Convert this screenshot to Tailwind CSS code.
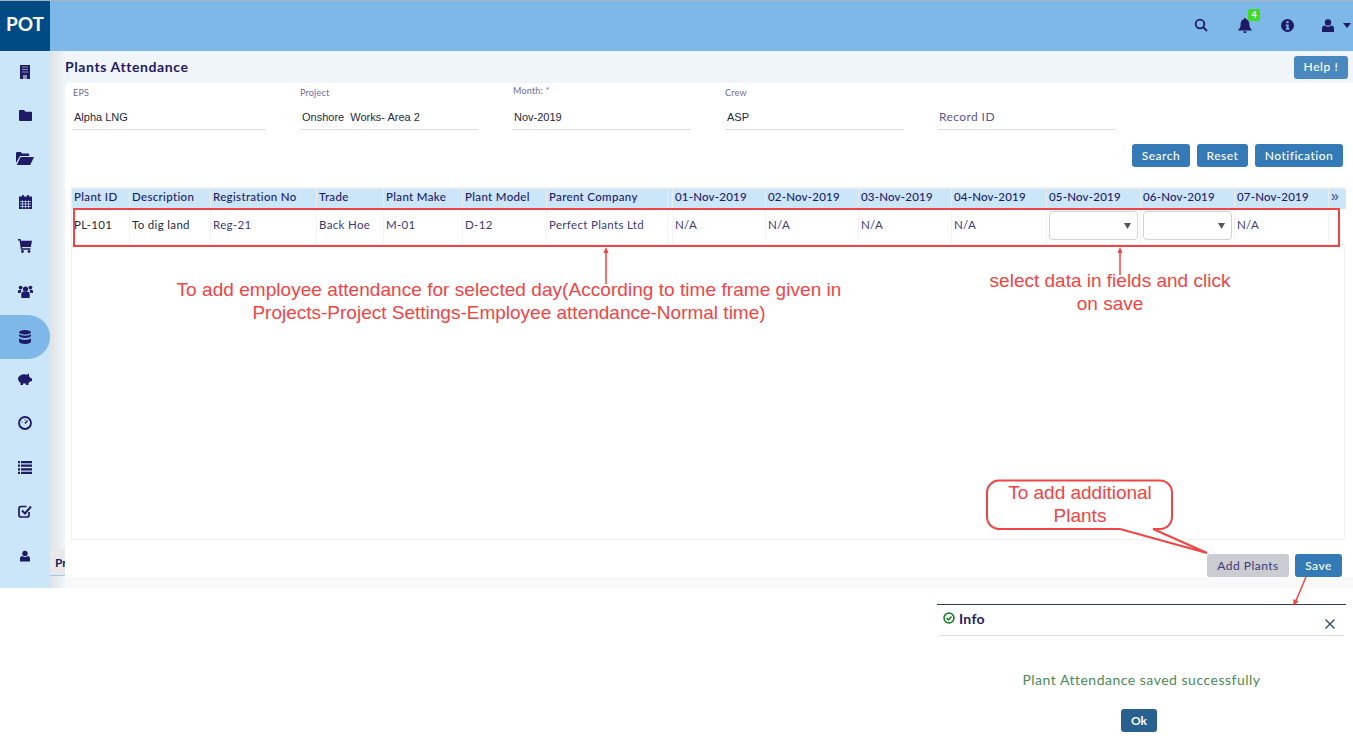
<!DOCTYPE html>
<html>
  <head>
    <title>Plants Attendance</title>
    <script src="https://cdn.jsdelivr.net/npm/@tailwindcss/browser@4"></script>
  </head>
  <body class="bg-white font-['Lato',sans-serif] text-[#1f1a66] overflow-hidden">
    <div class="relative w-[1353px] h-[740px] overflow-hidden">
      <div class="flex flex-col h-[588px]">
        <!-- top bar -->
        <header class="h-[51px] shrink-0 flex items-center bg-[#7db8e8] border-t border-[#a9b4bf]">
          <div class="w-[50px] h-full flex items-center justify-center pb-[3px] bg-[#004b84] text-white text-[19px] font-bold">POT</div>
          <div class="ml-auto flex items-center pr-[2px] pb-[2px] text-[#1f1a66]">
            <svg class="w-[14px] h-[14px] mr-[30px]" viewBox="0 0 14 14" fill="none" stroke="currentColor" stroke-width="1.8"><circle cx="6" cy="6" r="4.3"/><path d="M9.2 9.2L13 13"/></svg>
            <div class="relative mr-[29px]">
              <svg class="w-[14px] h-[15px]" viewBox="0 0 14 15" fill="currentColor"><path d="M7 0a1 1 0 0 1 1 1.2C10.300 1.700 11.300 3.500 11.300 6c0 3 1 4.500 2.400 5.800v.7H.3v-.7C1.700 10.500 2.700 9 2.700 6c0-2.500 1-4.300 3.300-4.800A1 1 0 0 1 7 0zM5.300 13.200h3.400A1.700 1.700 0 0 1 7 15a1.700 1.700 0 0 1-1.700-1.800z"/></svg>
              <span class="absolute left-[10px] top-[-9px] w-[12px] h-[12px] rounded-[2px] bg-[#3fdc24] text-white text-[9px] font-bold leading-[12px] text-center">4</span>
            </div>
            <svg class="w-[13px] h-[13px] mr-[28px]" viewBox="0 0 14 14"><circle cx="7" cy="7" r="7" fill="currentColor"/><rect x="5.800" y="2.300" width="2.400" height="2.200" fill="#7db8e8"/><path d="M5 6h3.200v4.300H9.200v1.300H5v-1.300h1V7.300H5z" fill="#7db8e8"/></svg>
            <svg class="w-[12px] h-[13px] mr-[9px]" viewBox="0 0 12 13" fill="currentColor"><circle cx="6" cy="3.400" r="3.200"/><path d="M0 13V9.500C0 7.600 1.300 6.500 2.800 6.500 3.700 7.300 4.800 7.700 6 7.700s2.300-.4 3.200-1.200C10.700 6.500 12 7.600 12 9.500V13z"/></svg>
            <svg class="w-[8px] h-[5px]" viewBox="0 0 8 5" fill="currentColor"><path d="M0 0h8L4 5z"/></svg>
          </div>
        </header>

        <div class="flex flex-1 min-h-0">
          <!-- sidebar -->
          <nav class="w-[50px] shrink-0 bg-[#cbe5f9] flex flex-col text-[#1f1a66]">
            <div class="h-[42px] flex items-center justify-center">
              <svg class="w-[10px] h-[14px]" viewBox="0 0 10 14"><rect width="10" height="14" fill="currentColor"/><path d="M2 2h6M2 4.500h6M2 7h6" stroke="#8f8db5" stroke-width="1.200"/><rect x="3" y="10" width="4" height="4" fill="#8f8db5"/></svg>
            </div>
            <div class="h-[44px] flex items-center justify-center">
              <svg class="w-[13px] h-[11px]" viewBox="0 0 13 11" fill="currentColor"><path d="M1 0h4l1.500 1.800H12a1 1 0 0 1 1 1V10a1 1 0 0 1-1 1H1a1 1 0 0 1-1-1V1a1 1 0 0 1 1-1z"/></svg>
            </div>
            <div class="h-[43px] flex items-center justify-center">
              <svg class="w-[18px] h-[13px]" viewBox="0 0 18 13" fill="currentColor"><path d="M0 11V1.200A1.200 1.200 0 0 1 1.200 0h3.600l1.400 1.500h6a1 1 0 0 1 1 1V4H4L0 11zM4.600 5H18l-3.800 8H.8z"/></svg>
            </div>
            <div class="h-[44px] flex items-center justify-center">
              <svg class="w-[13px] h-[14px]" viewBox="0 0 13 14"><rect y="1.500" width="13" height="12.500" fill="currentColor"/><rect x="3" width="1.800" height="3" fill="currentColor"/><rect x="8.200" width="1.800" height="3" fill="currentColor"/><path d="M1 6.500h11M1 9h11M1 11.500h11M3.500 5.500v8M6.500 5.500v8M9.500 5.500v8" stroke="#cbe5f9" stroke-width=".7"/></svg>
            </div>
            <div class="h-[44px] flex items-center justify-center">
              <svg class="w-[14px] h-[14px]" viewBox="0 0 14 14" fill="currentColor"><path d="M0 0h2.500l.5 1.800h11L12.800 8H4l.3 1.300h8.200v1.400H3L1.500 1.400H0z"/><circle cx="4.500" cy="12.500" r="1.400"/><circle cx="11" cy="12.500" r="1.400"/></svg>
            </div>
            <div class="h-[47px] flex items-center justify-center">
              <svg class="w-[15px] h-[13px]" viewBox="0 0 15 13" fill="currentColor"><circle cx="7.500" cy="4" r="2.600"/><circle cx="2.600" cy="2.600" r="1.900"/><circle cx="12.400" cy="2.600" r="1.900"/><path d="M3.300 13V9c0-1.500 1-2.500 2.200-2.500h4c1.200 0 2.200 1 2.200 2.500v4z"/><path d="M0 8V6.300C0 5.300.7 5 1.500 5h2L2.500 8zM15 8V6.300C15 5.300 14.300 5 13.500 5h-2l1 3z"/></svg>
            </div>
            <div class="h-[44px] flex items-center justify-center bg-[#7db8e8] rounded-r-full">
              <svg class="w-[12px] h-[14px]" viewBox="0 0 12 14" fill="currentColor"><ellipse cx="6" cy="2.200" rx="6" ry="2.200"/><path d="M0 4c1 1 3 1.700 6 1.700S11 5 12 4v2c-1 1.300-3 2-6 2S1 7.300 0 6zM0 8.300c1 1 3 1.700 6 1.700s5-.7 6-1.700v3.500C11 13.300 9 14 6 14s-5-.7-6-2.200z"/></svg>
            </div>
            <div class="h-[40px] flex items-center justify-center">
              <svg class="w-[16px] h-[12px]" viewBox="0 0 16 12" fill="currentColor"><path d="M1 5C2 2.500 4.500 1.200 7 1.200c1 0 2 .2 2.800.5L12 .5v2.700c.7.600 1.200 1.200 1.500 2H15v3h-1.800c-.4.700-1 1.300-1.700 1.700V12H9V10.500H6V12H3.500V9.800C2 9 1 7.500 1 5z"/></svg>
            </div>
            <div class="h-[48px] flex items-center justify-center">
              <svg class="w-[14px] h-[14px]" viewBox="0 0 14 14" fill="none" stroke="currentColor"><circle cx="7" cy="7" r="6" stroke-width="1.800"/><path d="M7 7.500L9.500 4.500" stroke-width="1.400"/><circle cx="4" cy="6" r=".6" fill="currentColor" stroke="none"/><circle cx="7" cy="3.800" r=".6" fill="currentColor" stroke="none"/></svg>
            </div>
            <div class="h-[40px] flex items-center justify-center">
              <svg class="w-[14px] h-[13px]" viewBox="0 0 14 13" fill="currentColor"><path d="M0 0h2v2.200H0zM3 0h11v2.200H3zM0 3.600h2v2.200H0zM3 3.600h11v2.200H3zM0 7.200h2v2.200H0zM3 7.200h11v2.200H3zM0 10.800h2V13H0zM3 10.800h11V13H3z"/></svg>
            </div>
            <div class="h-[48px] flex items-center justify-center">
              <svg class="w-[14px] h-[14px]" viewBox="0 0 14 14" fill="none" stroke="currentColor" stroke-width="1.700"><path d="M11 8v3a2 2 0 0 1-2 2H3a2 2 0 0 1-2-2V4.500a2 2 0 0 1 2-2h5.500"/><path d="M4 6.500l3 3 6-7" stroke-width="2"/></svg>
            </div>
            <div class="h-[42px] flex items-center justify-center">
              <svg class="w-[10px] h-[12px]" viewBox="0 0 12 13" fill="currentColor"><circle cx="6" cy="3.400" r="3.200"/><path d="M0 13V9.500C0 7.600 1.300 6.500 2.800 6.500 3.700 7.300 4.800 7.700 6 7.700s2.300-.4 3.200-1.200C10.700 6.500 12 7.600 12 9.500V13z"/></svg>
            </div>
          </nav>

          <!-- main area -->
          <main class="flex-1 min-w-0 flex flex-col bg-[linear-gradient(90deg,#dde3e7,#f0f5f9_15px)] relative">
            <div class="h-[32px] shrink-0 flex items-center pl-[15px] pr-[5px]">
              <h1 class="text-[14px] font-bold tracking-[0.6px] mb-[2px]">Plants Attendance</h1>
              <button class="ml-auto w-[54px] h-[23px] rounded-[3px] bg-[#4a89bf] text-white text-[12px] font-medium tracking-[0.6px]">Help !</button>
            </div>
            <div class="flex flex-1 min-h-0">
              <div class="w-[15px] shrink-0 flex flex-col justify-end pb-[12px]">
                <div class="h-[27px] bg-[#e8e8e8] border-b border-[#9cc8ee] pl-[5px] text-[12px] font-bold leading-[27px] overflow-hidden">Pr</div>
              </div>
              <section class="flex-1 min-w-0 flex flex-col bg-white rounded-tl-[4px]">
                <!-- filters -->
                <div class="h-[47px] shrink-0 flex text-[#6e6a9c] text-[9px] tracking-[0.2px]">
                  <div class="w-[235px] pl-[7px] pt-[3px]">
                    <label class="block pl-[1px]">EPS</label>
                    <div class="w-[194px] h-[22px] mt-[8px] pl-[2px] border-b border-[#dedede] font-['Liberation_Sans',sans-serif] text-[11px] text-[#1d2a3a] tracking-normal leading-[18px]">Alpha LNG</div>
                  </div>
                  <div class="w-[212px] pt-[3px]">
                    <label class="block">Project</label>
                    <div class="w-[178px] h-[22px] mt-[8px] pl-[2px] border-b border-[#dedede] font-['Liberation_Sans',sans-serif] text-[11px] text-[#1d2a3a] tracking-normal leading-[18px] whitespace-pre">Onshore  Works- Area 2</div>
                  </div>
                  <div class="w-[213px] pt-[1px]">
                    <label class="block pl-[1px]">Month: *</label>
                    <div class="w-[179px] h-[24px] mt-[8px] pl-[2px] border-b border-[#dedede] font-['Liberation_Sans',sans-serif] text-[11px] text-[#1d2a3a] tracking-normal leading-[22px]">Nov-2019</div>
                  </div>
                  <div class="w-[213px] pt-[3px]">
                    <label class="block">Crew</label>
                    <div class="w-[179px] h-[22px] mt-[8px] pl-[2px] border-b border-[#dedede] font-['Liberation_Sans',sans-serif] text-[11px] text-[#1d2a3a] tracking-normal leading-[18px]">ASP</div>
                  </div>
                  <div class="w-[178px] pt-[17px]">
                    <div class="h-[30px] pl-[1px] border-b border-[#dedede] text-[12px] text-[#5a5692] tracking-[0.4px] leading-[34px]">Record ID</div>
                  </div>
                </div>
                <!-- actions -->
                <div class="h-[57px] shrink-0 flex justify-end items-start gap-[7px] pt-[14px] pr-[10px] text-white text-[12px] font-medium tracking-[0.5px]">
                  <button class="w-[58px] h-[23px] rounded-[3px] bg-[#337ab7]">Search</button>
                  <button class="w-[51px] h-[23px] rounded-[3px] bg-[#337ab7]">Reset</button>
                  <button class="w-[88px] h-[23px] rounded-[3px] bg-[#337ab7]">Notification</button>
                </div>
                <!-- table panel -->
                <div class="h-[353px] shrink-0 ml-[6px] mr-[8px] border border-[#f0f0f0] text-[11.5px] tracking-[0.33px]">
                  <div class="grid grid-cols-[57px_80px_105px_66px_78px_83px_120px_4px_92px_92px_92px_94px_93px_93px_93px_17px] gap-x-px font-medium bg-[#ececec] h-[21px] pt-[1px] leading-[16px]">
                    <div class="bg-[#cbe5f9] pl-[2px]">Plant ID</div>
                    <div class="bg-[#cbe5f9] pl-[2px]">Description</div>
                    <div class="bg-[#cbe5f9] pl-[2px]">Registration No</div>
                    <div class="bg-[#cbe5f9] pl-[2px]">Trade</div>
                    <div class="bg-[#cbe5f9] pl-[2px]">Plant Make</div>
                    <div class="bg-[#cbe5f9] pl-[2px]">Plant Model</div>
                    <div class="bg-[#cbe5f9] pl-[2px]">Parent Company</div>
                    <div class="bg-[#cbe5f9]"></div>
                    <div class="bg-[#cbe5f9] pl-[2px] tracking-[0.2px]">01-Nov-2019</div>
                    <div class="bg-[#cbe5f9] pl-[2px] tracking-[0.2px]">02-Nov-2019</div>
                    <div class="bg-[#cbe5f9] pl-[2px] tracking-[0.2px]">03-Nov-2019</div>
                    <div class="bg-[#cbe5f9] pl-[2px] tracking-[0.2px]">04-Nov-2019</div>
                    <div class="bg-[#cbe5f9] pl-[2px] tracking-[0.2px]">05-Nov-2019</div>
                    <div class="bg-[#cbe5f9] pl-[2px] tracking-[0.2px]">06-Nov-2019</div>
                    <div class="bg-[#cbe5f9] pl-[2px] tracking-[0.2px]">07-Nov-2019</div>
                    <div class="bg-[#cbe5f9] pl-[2px] font-['Liberation_Sans',sans-serif] text-[14px] leading-[15px] font-normal text-[#3f3a78]">»</div>
                  </div>
                  <div class="grid grid-cols-[57px_80px_105px_66px_78px_83px_120px_4px_92px_92px_92px_94px_93px_93px_93px_17px] gap-x-px h-[36px] bg-[#f3f3f3] border-b border-[#f0f0f0] text-[#3f3a78] leading-[31px]">
                    <div class="bg-white pl-[2px] text-[#1d2a3a]">PL-101</div>
                    <div class="bg-white pl-[2px] text-[#1d2a3a]">To dig land</div>
                    <div class="bg-white pl-[2px]">Reg-21</div>
                    <div class="bg-white pl-[2px]">Back Hoe</div>
                    <div class="bg-white pl-[2px]">M-01</div>
                    <div class="bg-white pl-[2px]">D-12</div>
                    <div class="bg-white pl-[2px]">Perfect Plants Ltd</div>
                    <div class="bg-white"></div>
                    <div class="bg-white pl-[2px]">N/A</div>
                    <div class="bg-white pl-[2px]">N/A</div>
                    <div class="bg-white pl-[2px]">N/A</div>
                    <div class="bg-white pl-[2px]">N/A</div>
                    <div class="bg-white pl-[2px] pt-[2px]">
                      <div class="w-[89px] h-[29px] border border-[#d3d3d3] rounded-[4px] flex items-center justify-end pr-[6px]">
                        <svg class="w-[7px] h-[6px]" viewBox="0 0 7 6" fill="#555"><path d="M0 0h7L3.500 6z"/></svg>
                      </div>
                    </div>
                    <div class="bg-white pl-[2px] pt-[2px]">
                      <div class="w-[89px] h-[29px] border border-[#d3d3d3] rounded-[4px] flex items-center justify-end pr-[6px]">
                        <svg class="w-[7px] h-[6px]" viewBox="0 0 7 6" fill="#555"><path d="M0 0h7L3.500 6z"/></svg>
                      </div>
                    </div>
                    <div class="bg-white pl-[2px]">N/A</div>
                    <div class="bg-white"></div>
                  </div>
                </div>
                <!-- footer buttons -->
                <div class="flex-1 flex justify-end items-end gap-[6px] pr-[11px] text-[12px] tracking-[0.5px]">
                  <button class="w-[82px] h-[23px] rounded-[3px] bg-[#c9ccd1] text-[#3f3a78]">Add Plants</button>
                  <button class="w-[47px] h-[23px] rounded-[3px] bg-[#337ab7] text-white font-medium">Save</button>
                </div>
                <div class="h-[11px] shrink-0 bg-[#f9f9f9]"></div>
              </section>
            </div>
          </main>
        </div>
      </div>

      <!-- info dialog -->
      <div class="absolute left-[937px] top-[604px] w-[409px] h-[136px] border-t border-[#2b3f55] flex flex-col">
        <div class="h-[31px] mx-[2px] flex items-center border-b border-[#dcdcdc] pl-[4px] pr-[9px] pb-[4px]">
          <svg class="w-[12px] h-[12px] mr-[4px]" viewBox="0 0 12 12" fill="none" stroke="#0d7a1f" stroke-width="1.500"><circle cx="6" cy="6" r="5"/><path d="M3.500 6l2 2 3-3.500"/></svg>
          <span class="text-[14px] font-bold tracking-[0.3px]">Info</span>
          <svg class="ml-auto mt-[12px] w-[10px] h-[10px]" viewBox="0 0 10 10" stroke="#2b4a6e" stroke-width="1.400"><path d="M.5.500l9 9M9.500.500l-9 9"/></svg>
        </div>
        <p class="mt-[35px] text-center text-[14px] text-[#4b8a54] tracking-[0.5px] leading-[18px]">Plant Attendance saved successfully</p>
        <button class="self-center mt-[20px] mr-[5px] w-[36px] h-[23px] rounded-[3px] bg-[#28608f] text-white text-[12px] font-bold">Ok</button>
      </div>

      <!-- red annotations over the page -->
      <svg class="absolute inset-0 pointer-events-none" width="1353" height="740" viewBox="0 0 1353 740" fill="none" stroke="#f24444">
        <rect x="74" y="209" width="1265" height="37" stroke-width="2"/>
        <path d="M606 284V250M1120 275V250" stroke-width="1.500"/>
        <path d="M606 247l-2.500 6h5zM1120 247l-2.500 6h5z" fill="#f24444" stroke="none"/>
        <path d="M1000 480.500H1160a12 12 0 0 1 12 12V517a12 12 0 0 1-12 12h-7L1207 553 1120 529H1000a12 12 0 0 1-13-12V492.500a12 12 0 0 1 13-12z" fill="white" stroke-width="2"/>
        <path d="M1306 577L1295 603" stroke-width="1.500"/>
        <path d="M1293 606l.5-7 5 2.500z" fill="#f24444" stroke="none"/>
      </svg>
      <div class="absolute left-[109px] top-[278px] w-[800px] text-center font-['Liberation_Sans',sans-serif] text-[19px] leading-[23px] text-[#f24444]"><span class="tracking-[0.05px]">To add employee attendance for selected day(According to time frame given in</span><br>Projects-Project Settings-Employee attendance-Normal time)</div>
      <div class="absolute left-[960px] top-[269px] w-[300px] text-center font-['Liberation_Sans',sans-serif] text-[19px] leading-[23px] text-[#f24444]">select data in fields and click<br>on save</div>
      <div class="absolute left-[987px] top-[481px] w-[186px] text-center font-['Liberation_Sans',sans-serif] text-[19px] leading-[23px] text-[#f24444]">To add additional<br>Plants</div>
    </div>
  </body>
</html>
